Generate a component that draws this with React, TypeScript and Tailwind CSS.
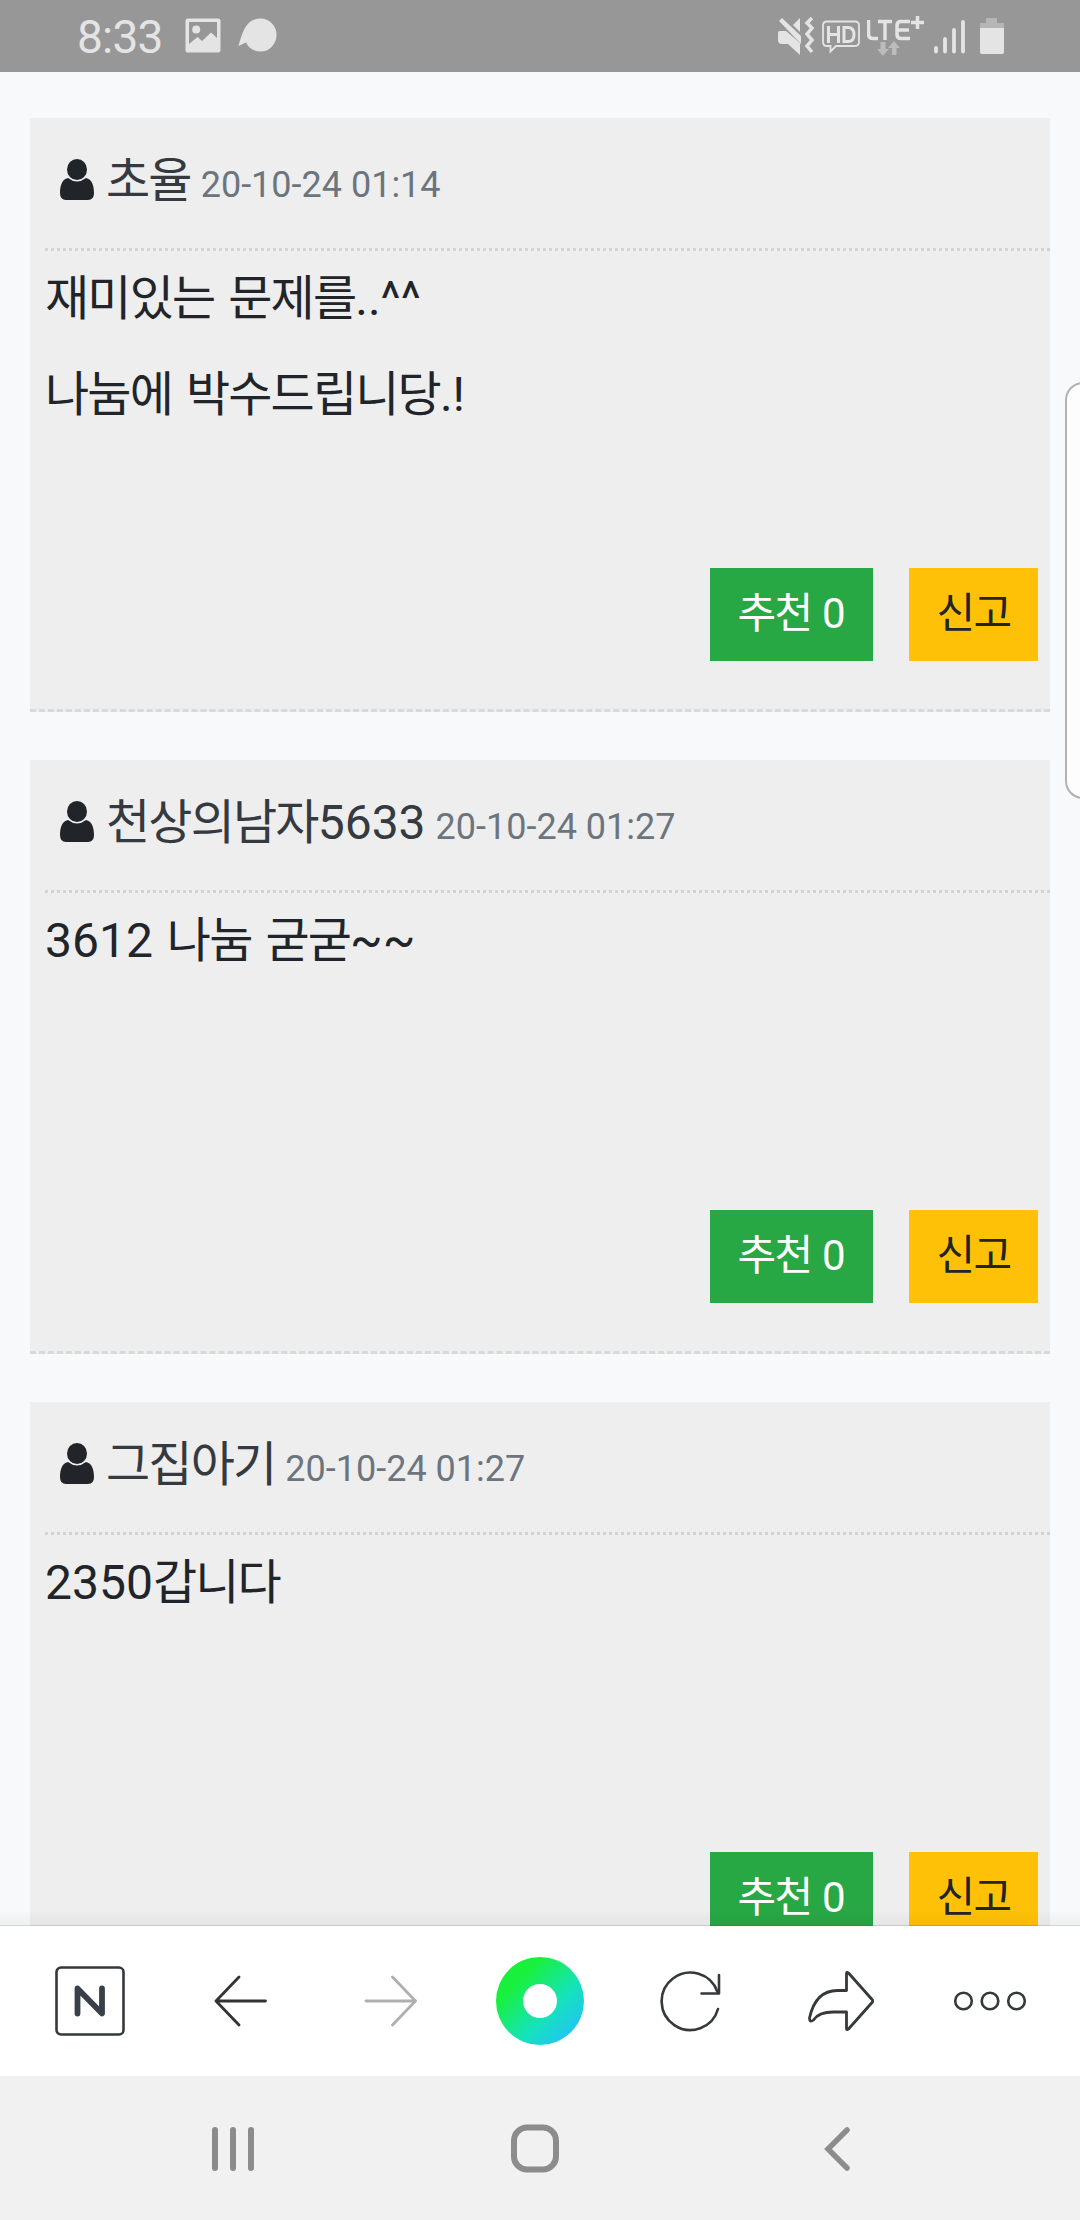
import { Fragment, type ReactNode } from "react";

type Comment = {
  id: number;
  author: string;
  date: string;
  lines: string[];
  likes: number;
};

const comments: Comment[] = [
  { id: 1, author: "초율", date: "20-10-24 01:14", lines: ["재미있는 문제를..^^", "나눔에 박수드립니당.!"], likes: 0 },
  { id: 2, author: "천상의남자5633", date: "20-10-24 01:27", lines: ["3612 나눔 굳굳~~"], likes: 0 },
  { id: 3, author: "그집아기", date: "20-10-24 01:27", lines: ["2350갑니다"], likes: 0 },
];

// Hangul is set slightly tighter than the latin digits around it
function Mixed({ text }: { text: string }) {
  return (
    <>
      {text.split(/([가-힣]+)/).map((part, i) =>
        i % 2 ? <span key={i} className="tracking-[-0.038em]">{part}</span> : <Fragment key={i}>{part}</Fragment>
      )}
    </>
  );
}

function StatusBar() {
  return (
    <header className="flex h-[72px] shrink-0 items-center bg-[#979797] pl-[77px] pr-[75px] text-[#e4e4e4]">
      <span className="pt-[2px] text-[46px] leading-[72px] tracking-[-0.8px]">8:33</span>
      <svg className="ml-[22px]" width="36" height="36" viewBox="0 0 36 36" fill="currentColor">
        <path fillRule="evenodd" d="M3 0.5H33Q35.5 0.5 35.5 3V32Q35.5 34.5 33 34.5H3Q0.5 34.5 0.5 32V3Q0.5 0.5 3 0.5ZM4 4V26L12.500 19L17 23L26 14.500L32 20V4Z" />
        <circle cx="11.200" cy="11.500" r="4" />
      </svg>
      <svg className="ml-[17px]" width="40" height="36" viewBox="0 0 40 36" fill="currentColor">
        <path d="M0.500 28C4 17 7 0.500 22.500 0.500A16 16.500 0 0 1 22.500 33.500Q12.500 33.500 8 24.500Z" />
      </svg>

      <div className="ml-auto flex items-center gap-[7px]">
        <svg className="-mr-px" width="38" height="40" viewBox="0 0 38 40" fill="currentColor">
          <path d="M2 15H8L22 27V39L10 28H4Q0 28 0 24V17Q0 15 2 15Z" />
          <path d="M1 5L4 2L23 20V28Z" />
          <path d="M15 9L22 2V16Z" />
          <path d="M34 2L29 7L34 12L29 18L34 24L29 30L34 36" fill="none" stroke="currentColor" strokeWidth="3.500" />
        </svg>
        <svg width="38" height="36" viewBox="0 0 38 36" fill="none" stroke="currentColor">
          <path d="M5 3.500H33Q37 3.500 37 7.500V24Q37 28 33 28H14L8.500 33.500V28H5Q1 28 1 24V7.500Q1 3.500 5 3.500Z" strokeWidth="1.800" />
          <path d="M6.500 8V25M16.500 8V25M6.500 16.500H16.500M22 9.500V23.500H26Q32 23.500 32 16.500Q32 9.500 26 9.500H22Z" strokeWidth="3" />
        </svg>
        <svg width="58" height="42" viewBox="0 0 58 42" fill="none" stroke="currentColor">
          <path d="M1.500 5V19Q1.500 23.500 6 23.500H11M11 6.500H25M18 6.500V25M43 6.500H34Q30 6.500 30 10.500V19.500Q30 23.500 34 23.500H43M31 15H42" strokeWidth="3.500" />
          <path d="M44 7.500H57M50.500 1V14" strokeWidth="3.500" />
          <path d="M13.500 27H18.500V34H22L16 41L10 34H13.500ZM25 40H29.500V33H33L27 26L21 33H25Z" fill="#bcbcbc" stroke="none" />
        </svg>
        <svg className="ml-px" width="32" height="36" viewBox="0 0 32 36" fill="none" stroke="currentColor" strokeWidth="3.800" strokeLinecap="round">
          <path d="M3 30V33.500M12 21V33.500M21 12V33.500M30 4V33.500" />
        </svg>
        <svg className="ml-[7px]" width="26" height="38" viewBox="0 0 26 38" fill="currentColor">
          <path d="M7 1H18V6H25V12H1V6H7Z" fill="#b6b6b6" />
          <path d="M1 11H25V35Q25 37 23 37H3Q1 37 1 35Z" />
        </svg>
      </div>
    </header>
  );
}

function UserIcon() {
  return (
    <svg width="36" height="42" viewBox="0 0 36 42" fill="#212529">
      <path d="M9 19C3 20 1 27 1 34Q1 41 7 41H29Q35 41 35 34C35 27 33 20 27 19Q18 26 9 19Z" />
      <ellipse cx="18" cy="10.500" rx="10.800" ry="11.300" fill="#eee" />
      <ellipse cx="18" cy="10.500" rx="10" ry="10.500" />
    </svg>
  );
}

function CommentCard({ comment }: { comment: Comment }) {
  return (
    <article className="flex h-[594px] shrink-0 flex-col border-b-[3px] border-dashed border-[#d9d9d9] bg-[#eee] pl-[15px]">
      <div className="flex h-[133px] shrink-0 items-start border-b-[3px] border-dotted border-[#d3d3d3] pl-[14px] pt-[27px]">
        <div className="mt-[14px]">
          <UserIcon />
        </div>
        <p className="ml-[11px] text-[48px] leading-[72px] text-[#343a40]">
          <Mixed text={comment.author} />
          <span className="ml-[10px] text-[36px] text-[#6c757d]">{comment.date}</span>
        </p>
      </div>
      <div className="flex flex-col gap-[24px] pt-[12px] text-[48px] leading-[72px] text-[#212529] [word-spacing:2px]">
        {comment.lines.map(line => (
          <p key={line}><Mixed text={line} /></p>
        ))}
      </div>
      <div className="mb-[48px] mr-[12px] mt-auto flex justify-end gap-[36px] text-[42px] leading-[63px] [word-spacing:1px]">
        <button className="h-[93px] w-[163px] bg-[#28a745] pb-[2px] text-white"><Mixed text={`추천 ${comment.likes}`} /></button>
        <button className="h-[93px] w-[129px] bg-[#ffc107] pb-[2px] text-[#212529]"><Mixed text="신고" /></button>
      </div>
    </article>
  );
}

function ToolButton({ label, children }: { label: string; children: ReactNode }) {
  return (
    <button aria-label={label} className="flex h-full w-[150px] items-center justify-center">
      {children}
    </button>
  );
}

function BrowserBar() {
  return (
    <nav className="flex h-[150px] shrink-0 items-center bg-white px-[15px]">
      <ToolButton label="Home">
        <svg width="70" height="70" viewBox="0 0 70 70" fill="none" stroke="#36393c">
          <rect x="1.500" y="1.500" width="67" height="67" rx="4.500" strokeWidth="2.600" />
          <path d="M22.500 47.500V22.500L47 47.500V22.500" stroke="#3a3f4a" strokeWidth="5.800" strokeLinecap="round" strokeLinejoin="round" />
        </svg>
      </ToolButton>
      <ToolButton label="Back">
        <svg width="54" height="54" viewBox="-1 0 54 54" fill="none" stroke="#333" strokeWidth="2.800" strokeLinecap="round" strokeLinejoin="round">
          <path d="M51.500 27H2M25 3L2 27L25 51" />
        </svg>
      </ToolButton>
      <ToolButton label="Forward">
        <svg width="54" height="54" viewBox="-1 0 54 54" fill="none" stroke="#afafaf" strokeWidth="2.800" strokeLinecap="round" strokeLinejoin="round">
          <path d="M2 27H51.500M28.500 3L51.500 27L28.500 51" />
        </svg>
      </ToolButton>
      <ToolButton label="Green dot">
        <svg width="88" height="88" viewBox="0 0 88 88">
          <defs>
            <linearGradient id="dot" x1="0.150" y1="0.150" x2="0.850" y2="0.850">
              <stop offset="0.150" stopColor="#19f03c" />
              <stop offset="0.650" stopColor="#15e3b8" />
              <stop offset="1" stopColor="#1fc8ee" />
            </linearGradient>
          </defs>
          <path fill="url(#dot)" fillRule="evenodd" d="M44 0A44 44 0 1 1 44 88A44 44 0 1 1 44 0ZM44 27A17 17 0 1 0 44 61A17 17 0 1 0 44 27Z" />
        </svg>
      </ToolButton>
      <ToolButton label="Reload">
        <svg width="62" height="62" viewBox="0 0 62 62" fill="none" stroke="#36393c" strokeWidth="2.600" strokeLinecap="round" strokeLinejoin="round">
          <path d="M59 39A28.700 28.700 0 1 1 58.500 22" />
          <path d="M60 5V23.500H42.500" />
        </svg>
      </ToolButton>
      <ToolButton label="Share">
        <svg width="68" height="62" viewBox="-1.500 0 68 62" fill="none" stroke="#36393c" strokeWidth="2.800" strokeLinecap="round" strokeLinejoin="round">
          <path d="M39 20.500V3.500Q39 1.500 41 3L65 30Q66 31 65 32L41 59Q39 60.500 39 58.500V42H26Q11 42 6 50Q2 53 2 48Q8 20.500 30 20.500Z" />
        </svg>
      </ToolButton>
      <ToolButton label="More">
        <svg width="74" height="22" viewBox="0 0 74 22" fill="none" stroke="#36393c" strokeWidth="2.600">
          <circle cx="10.500" cy="11" r="8.300" />
          <circle cx="37" cy="11" r="8.300" />
          <circle cx="63.500" cy="11" r="8.300" />
        </svg>
      </ToolButton>
    </nav>
  );
}

function SystemNav() {
  return (
    <nav className="flex h-[144px] shrink-0 items-center justify-between bg-[#f1f1f1] pl-[209px] pr-[219px]">
      <svg width="48" height="48" viewBox="0 0 48 48" fill="none" stroke="#8c8c8c" strokeWidth="6" strokeLinecap="round">
        <path d="M6 6V44M24 6V44M42 6V44" />
      </svg>
      <svg width="50" height="50" viewBox="0 0 50 50" fill="none" stroke="#8c8c8c" strokeWidth="6">
        <rect x="4" y="4.500" width="42" height="42" rx="13" />
      </svg>
      <svg width="48" height="48" viewBox="0 0 48 48" fill="none" stroke="#8c8c8c" strokeWidth="5.500" strokeLinecap="round">
        <path d="M34 6L15 25L34 44" />
      </svg>
    </nav>
  );
}

export default function App() {
  return (
    <div className="relative flex h-[2220px] w-[1080px] flex-col overflow-hidden bg-[#f8f9fb] font-[Roboto,'Noto_Sans_CJK_KR',sans-serif]">
      <StatusBar />
      <main className="relative min-h-0 flex-1 overflow-hidden">
        <div className="flex flex-col gap-[48px] px-[30px] pt-[46px]">
          {comments.map(c => <CommentCard key={c.id} comment={c} />)}
        </div>
        {/* shade cast by the toolbar */}
        <div className="absolute inset-x-0 bottom-0 h-[16px] border-b border-black/15 bg-linear-to-b from-transparent to-black/4" />
      </main>
      <BrowserBar />
      <SystemNav />
      {/* edge panel handle */}
      <div className="absolute left-[1065px] top-[382px] h-[417px] w-[40px] rounded-[18px] border-2 border-[#b2b2b2] bg-[#fdfdfd]" />
    </div>
  );
}
